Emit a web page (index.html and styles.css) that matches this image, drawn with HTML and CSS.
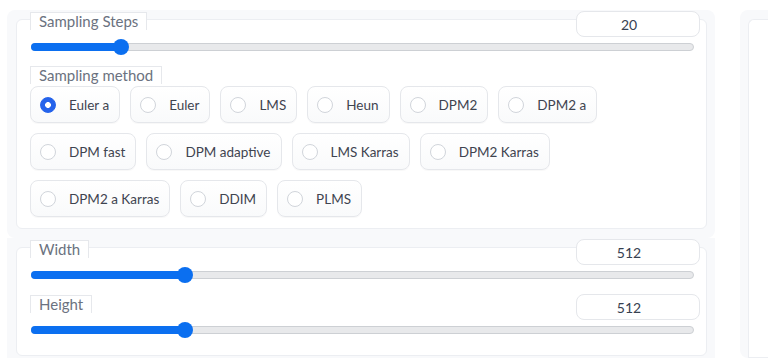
FILE: index.html
```html
<!DOCTYPE html>
<html>
<head>
<meta charset="utf-8">
<link rel="stylesheet" href="styles.css">
</head>
<body>
<div class="page">
  <div class="col-main">
    <div class="panel">
      <div class="box">
        <div class="head">
          <span class="label">Sampling Steps</span>
          <input class="num" type="text" value="20" readonly>
        </div>
        <div class="slider">
          <div class="track">
            <div class="fill" style="width: calc(8px + (100% - 16px) * 0.1275)"></div>
            <div class="thumb" style="left: calc((100% - 16px) * 0.1275)"></div>
          </div>
        </div>
        <div class="head method-head">
          <span class="label">Sampling method</span>
        </div>
        <div class="radios">
          <label class="opt checked"><span class="dot"></span>Euler a</label>
          <label class="opt"><span class="dot"></span>Euler</label>
          <label class="opt"><span class="dot"></span>LMS</label>
          <label class="opt"><span class="dot"></span>Heun</label>
          <label class="opt"><span class="dot"></span>DPM2</label>
          <label class="opt"><span class="dot"></span>DPM2 a</label>
          <label class="opt"><span class="dot"></span>DPM fast</label>
          <label class="opt"><span class="dot"></span>DPM adaptive</label>
          <label class="opt"><span class="dot"></span>LMS Karras</label>
          <label class="opt"><span class="dot"></span>DPM2 Karras</label>
          <label class="opt"><span class="dot"></span>DPM2 a Karras</label>
          <label class="opt"><span class="dot"></span>DDIM</label>
          <label class="opt"><span class="dot"></span>PLMS</label>
        </div>
      </div>
    </div>
    <div class="panel panel2">
      <div class="box box2">
        <div class="head">
          <span class="label">Width</span>
          <input class="num" type="text" value="512" readonly>
        </div>
        <div class="slider">
          <div class="track">
            <div class="fill" style="width: calc(8px + (100% - 16px) * 0.2258)"></div>
            <div class="thumb" style="left: calc((100% - 16px) * 0.2258)"></div>
          </div>
        </div>
        <div class="head head-gap">
          <span class="label">Height</span>
          <input class="num" type="text" value="512" readonly>
        </div>
        <div class="slider">
          <div class="track">
            <div class="fill" style="width: calc(8px + (100% - 16px) * 0.2258)"></div>
            <div class="thumb" style="left: calc((100% - 16px) * 0.2258)"></div>
          </div>
        </div>
      </div>
    </div>
  </div>
  <div class="col-side">
    <div class="side-panel">
      <div class="side-box"></div>
    </div>
  </div>
</div>
</body>
</html>
```

FILE: styles.css
```css
* { box-sizing: border-box; }
html, body { margin: 0; padding: 0; background: #ffffff; }
body {
  font-family: Lato, "Liberation Sans", sans-serif;
  font-size: 14px;
  color: #374151;
  overflow: hidden;
  height: 358px;
}
.page {
  display: flex;
  gap: 25px;
  padding: 10px 0 0 7px;
}
.col-main {
  width: 708px;
  flex: none;
  display: flex;
  flex-direction: column;
}
.panel {
  background: #f8f9fb;
  border-radius: 8px;
  padding: 9px 8px 9px 9px;
}
.panel2 {
  padding-top: 9px;
  border-radius: 0 0 8px 8px;
}
.box {
  background: #ffffff;
  border: 1px solid #eceef2;
  border-radius: 6px;
  padding: 0 6px 11px 13px;
}
.box2 { padding-bottom: 17px; }
.head {
  display: flex;
  justify-content: space-between;
  align-items: flex-start;
  margin-top: -9px;
}
.method-head { margin-top: 11px; }
.head-gap { margin-top: 11px; }
.label {
  display: inline-block;
  height: 18px;
  line-height: 17px;
  margin-top: 1px;
  padding: 0 8px 0 8px;
  background: #ffffff;
  border: 1px solid #e6e8ec;
  border-bottom: none;
  color: #6b7280;
  font-size: 15px;
}
.method-head .label { margin-top: 0; }
.num {
  width: 124px;
  height: 26px;
  border: 1px solid #e5e7eb;
  border-radius: 8px;
  background: #ffffff;
  font-family: Lato, "Liberation Sans", sans-serif;
  font-size: 14px;
  color: #374151;
  text-align: center;
  padding: 0 18px 0 0;
  outline: none;
}
.slider {
  height: 16px;
  margin: 2px 6px 0 1px;
  display: flex;
  align-items: center;
}
.track {
  position: relative;
  flex: 1;
  height: 8px;
  border-radius: 4px;
  background: #e8e9eb;
  border: 1px solid #cdd0d4;
}
.fill {
  position: absolute;
  left: -1px;
  top: -1px;
  height: 8px;
  border-radius: 4px;
  background: #0b6ff0;
}
.thumb {
  position: absolute;
  top: 50%;
  width: 16px;
  height: 16px;
  margin-left: -1px;
  margin-top: -8px;
  border-radius: 50%;
  background: #0b6ff0;
}
.radios {
  display: flex;
  flex-wrap: wrap;
  gap: 10px;
  width: 580px;
  margin-top: 2px;
}
.opt {
  display: flex;
  align-items: center;
  gap: 13px;
  height: 37px;
  padding: 0 10px 0 9px;
  border: 1px solid #e5e7eb;
  border-radius: 8px;
  background: linear-gradient(to bottom, #ffffff, #f9fafb);
  box-shadow: 0 1px 1px rgba(0,0,0,0.03);
  color: #3f4450;
  font-size: 13.5px;
  white-space: nowrap;
}
.dot {
  width: 16px;
  height: 16px;
  border-radius: 50%;
  border: 1px solid #d1d5db;
  background: #ffffff;
  flex: none;
}
.checked .dot {
  border-color: #2563eb;
  background: radial-gradient(circle, #ffffff 0 2.6px, #2563eb 3.2px);
}
.col-side {
  flex: 1;
  min-width: 0;
}
.side-panel {
  background: #f8f9fb;
  border-radius: 8px 0 0 8px;
  padding: 9px 0 0 8px;
  height: 348px;
}
.side-box {
  background: #ffffff;
  border: 1px solid #eceef2;
  border-right: none;
  border-radius: 6px 0 0 0;
  height: 100%;
}
```
